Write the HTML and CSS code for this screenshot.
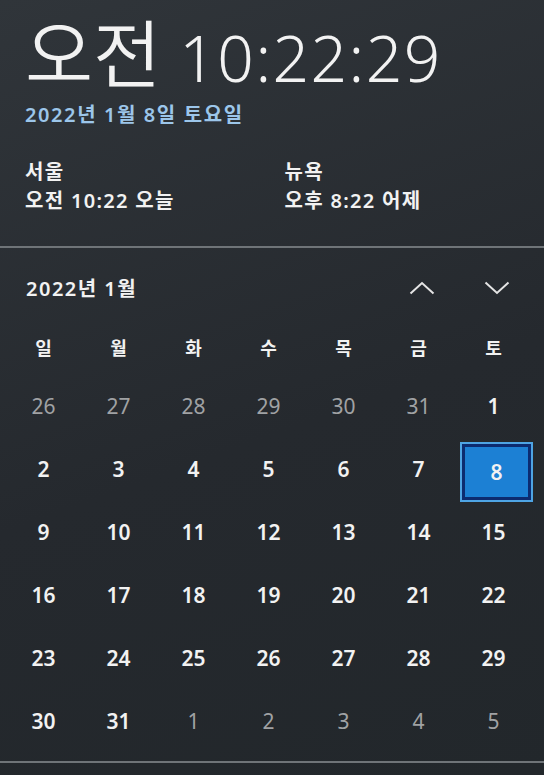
FILE: index.html
```html
<!DOCTYPE html>
<html lang="ko">
<head>
    <meta charset="UTF-8">
    <meta name="viewport" content="width=device-width, initial-scale=1">
    <link rel="stylesheet" href="styles.css">
</head>
<body>

<div class="flyout">
    <div class="clock">
        <div class="time"><span class="ampm">오전</span> 10:22:29</div>
        <div class="date">2022년 1월 8일 토요일</div>

        <div class="zones">
            <div class="zone">
                <div>서울</div>
                <div>오전 10:22 오늘</div>
            </div>
            <div class="zone">
                <div>뉴욕</div>
                <div>오후 8:22 어제</div>
            </div>
        </div>
    </div>

    <div class="calendar">
        <div class="cal-head">
            <span class="month">2022년 1월</span>
            <div class="nav">
                <svg width="26" height="14" viewBox="0 0 26 14"><path d="M1.5 12.5 L13 2 L24.5 12.5" fill="none" stroke="#e4e4e4" stroke-width="2"/></svg>
                <svg width="26" height="14" viewBox="0 0 26 14"><path d="M1.5 1.5 L13 12 L24.5 1.5" fill="none" stroke="#e4e4e4" stroke-width="2"/></svg>
            </div>
        </div>

        <div class="weekdays">
            <span>일</span><span>월</span><span>화</span><span>수</span><span>목</span><span>금</span><span>토</span>
        </div>

        <div class="days">
            <span class="other">26</span><span class="other">27</span><span class="other">28</span><span class="other">29</span><span class="other">30</span><span class="other">31</span><span>1</span>
            <span>2</span><span>3</span><span>4</span><span>5</span><span>6</span><span>7</span><span class="today">8</span>
            <span>9</span><span>10</span><span>11</span><span>12</span><span>13</span><span>14</span><span>15</span>
            <span>16</span><span>17</span><span>18</span><span>19</span><span>20</span><span>21</span><span>22</span>
            <span>23</span><span>24</span><span>25</span><span>26</span><span>27</span><span>28</span><span>29</span>
            <span>30</span><span>31</span><span class="other">1</span><span class="other">2</span><span class="other">3</span><span class="other">4</span><span class="other">5</span>
        </div>
    </div>
</div>

</body>
</html>
```

FILE: styles.css
```css
* {
    box-sizing: border-box;
}

body {
    margin: 0;
    background-color: #272c31;
    color: #f2f2f2;
    font-family: "Noto Sans", "Noto Sans CJK KR", sans-serif;
}

.flyout {
    width: 544px;
    height: 775px;
    overflow: hidden;
    background: linear-gradient(160deg, #30353a 0%, #25292e 55%, #22272b 100%);
}

.clock {
    padding: 14px 0 0 25px;
    height: 248px;
    border-bottom: 2px solid #6f7478;
}

.time {
    font-size: 64px;
    font-weight: 350;
    line-height: 80px;
    letter-spacing: 1.5px;
    white-space: nowrap;
}

.time .ampm {
    font-size: 74px;
    letter-spacing: 0;
}

.date {
    margin-top: 1px;
    font-size: 20px;
    font-weight: 600;
    letter-spacing: 1.6px;
    color: #9cc6ea;
}

.zones {
    display: flex;
    margin-top: 29px;
    font-size: 20px;
    font-weight: 600;
    letter-spacing: 1.3px;
    line-height: 29px;
}

.zone {
    width: 265px;
}

.calendar {
    height: 515px;
    border-bottom: 2px solid #6f7478;
}

.cal-head {
    display: flex;
    align-items: center;
    justify-content: space-between;
    padding: 7px 34px 0 26px;
    height: 72px;
}

.month {
    font-size: 20px;
    font-weight: 600;
    letter-spacing: 1.5px;
}

.nav {
    display: flex;
    gap: 49px;
}

.weekdays,
.days {
    display: grid;
    grid-template-columns: repeat(7, 75px);
    margin-left: 6px;
    text-align: center;
}

.weekdays {
    height: 54px;
    align-items: center;
    font-size: 18px;
    font-weight: 700;
}

.days {
    grid-auto-rows: 63px;
    font-size: 21px;
    font-weight: 600;
}

.days span {
    display: flex;
    align-items: center;
    justify-content: center;
}

.days .other {
    color: #a0a2a4;
    font-weight: 400;
}

.days .today {
    margin: 5px -2px -2px 4px;
    background-color: #1c80d4;
    border: 2px solid #4ea4e4;
    box-shadow: inset 0 0 0 3px #0c2b70;
}
```
